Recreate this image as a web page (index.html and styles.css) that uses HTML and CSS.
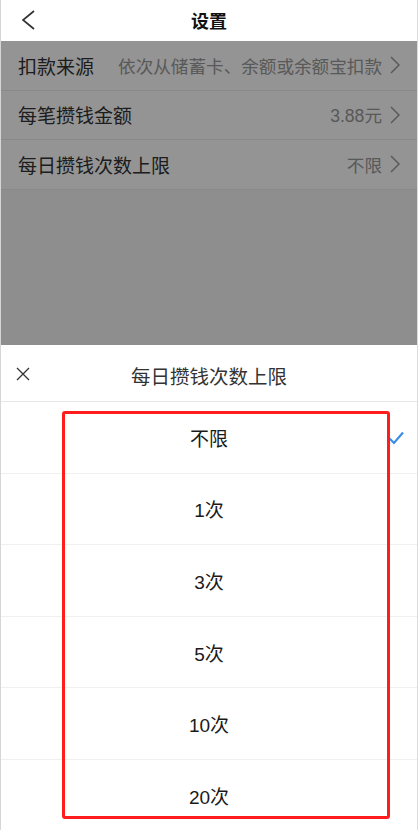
FILE: index.html
```html
<!DOCTYPE html>
<html lang="zh-CN">
<head>
<meta charset="utf-8">
<title>设置</title>
<link rel="stylesheet" href="styles.css">
</head>
<body>
<div class="page">
  <header class="nav">
    <svg class="nav-back" width="14" height="20" viewBox="0 0 14 20"><polyline points="12,1 1,10 12,19" fill="none" stroke="#333" stroke-width="1.7" stroke-linejoin="miter"/></svg>
    <h1 class="nav-title">设置</h1>
    <span></span>
  </header>
  <ul class="list">
    <li class="row"><span class="row-label">扣款来源</span><span class="row-value">依次从储蓄卡、余额或余额宝扣款</span><svg class="row-arrow" width="10" height="18" viewBox="0 0 10 18"><polyline points="1,1 9,9 1,17" fill="none" stroke="#999" stroke-width="1.5"/></svg></li>
    <li class="row"><span class="row-label">每笔攒钱金额</span><span class="row-value">3.88元</span><svg class="row-arrow" width="10" height="18" viewBox="0 0 10 18"><polyline points="1,1 9,9 1,17" fill="none" stroke="#999" stroke-width="1.5"/></svg></li>
    <li class="row"><span class="row-label">每日攒钱次数上限</span><span class="row-value">不限</span><svg class="row-arrow" width="10" height="18" viewBox="0 0 10 18"><polyline points="1,1 9,9 1,17" fill="none" stroke="#999" stroke-width="1.5"/></svg></li>
  </ul>
  <div class="mask"></div>
  <section class="sheet">
    <div class="sheet-head">
      <svg class="sheet-close" width="14" height="14" viewBox="0 0 14 14"><path d="M1 1 L13 13 M13 1 L1 13" stroke="#333" stroke-width="1.3"/></svg>
      <h2 class="sheet-title">每日攒钱次数上限</h2>
      <span></span>
    </div>
    <ul class="options">
      <li class="option"><span></span><span class="option-text">不限</span><svg class="option-check" width="16" height="14" viewBox="0 0 16 14"><polyline points="1.5,7.5 6,12 15,1.5" fill="none" stroke="#3c8ce8" stroke-width="2.2"/></svg></li>
      <li class="option"><span></span><span class="option-text">1次</span><span></span></li>
      <li class="option"><span></span><span class="option-text">3次</span><span></span></li>
      <li class="option"><span></span><span class="option-text">5次</span><span></span></li>
      <li class="option"><span></span><span class="option-text">10次</span><span></span></li>
      <li class="option"><span></span><span class="option-text">20次</span><span></span></li>
    </ul>
  </section>
  <div class="highlight"></div>
</div>
</body>
</html>
```

FILE: styles.css
```css
* { box-sizing: border-box; }
html, body {
  margin: 0;
  padding: 0;
  width: 418px;
  height: 830px;
  overflow: hidden;
  background: #fff;
}
body {
  font-family: "Liberation Sans", "Noto Sans CJK SC", sans-serif;
}
ul { list-style: none; margin: 0; padding: 0; }
h1, h2 { margin: 0; font-weight: normal; }

.page {
  position: relative;
  width: 418px;
  height: 830px;
  background: #f5f5f5;
  border-left: 1px solid #d6d6d6;
  border-right: 1px solid #dcdcdc;
  overflow: hidden;
}

.nav {
  height: 41px;
  background: #fff;
  display: grid;
  grid-template-columns: 60px 1fr 60px;
  align-items: center;
}
.nav-back { margin-left: 21px; margin-top: -2px; }
.nav-title {
  text-align: center;
  font-size: 18px;
  font-weight: bold;
  color: #111;
  margin-top: -2px;
}

.list { background: #fff; }
.row {
  height: 49.5px;
  display: flex;
  align-items: center;
  padding: 0 17px 0 17px;
  border-bottom: 1px solid #ececec;
}
.row-label { font-size: 19px; color: #333; }
.row-value { margin-left: auto; font-size: 17.6px; color: #999; }
.row-arrow { margin-left: 8px; }

.mask {
  position: absolute;
  top: 41px;
  left: -1px;
  right: -1px;
  bottom: 0;
  background: rgba(0, 0, 0, 0.42);
}

.sheet {
  position: absolute;
  left: 0;
  right: 0;
  bottom: 0;
  height: 485px;
  background: #fff;
}
.sheet-head {
  height: 57px;
  display: grid;
  grid-template-columns: 60px 1fr 60px;
  align-items: center;
  border-bottom: 1px solid #e6e6e6;
}
.sheet-close { margin-left: 15px; margin-top: 2px; }
.sheet-title {
  text-align: center;
  font-size: 19.5px;
  color: #333;
  margin-top: 4px;
}

.option {
  height: 71.6px;
  display: grid;
  grid-template-columns: 1fr auto 1fr;
  align-items: center;
  border-bottom: 1px solid #f0f0f0;
}
.option-text { font-size: 19px; color: #1a1a1a; }
.option-check { justify-self: end; margin-right: 13px; margin-top: 2px; }

.highlight {
  position: absolute;
  left: 61px;
  top: 411px;
  width: 328px;
  height: 408px;
  border: 3.5px solid #ff1c1c;
  border-radius: 3px;
}
```
